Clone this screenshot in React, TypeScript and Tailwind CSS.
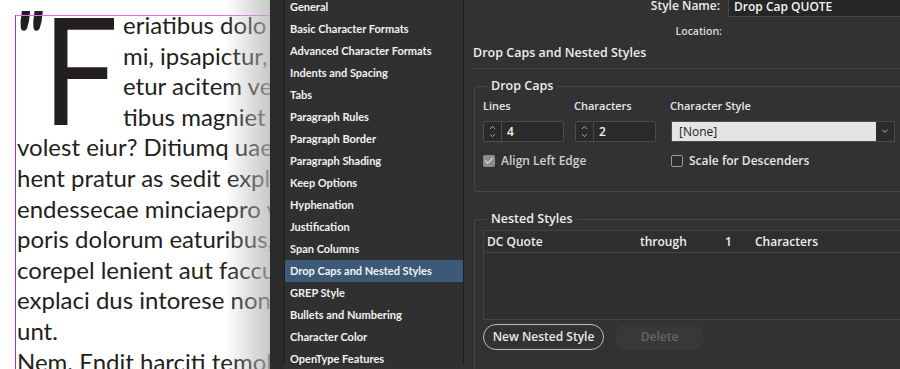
import { ChevronDown, ChevronUp, Check } from "lucide-react";

const items = [
  "General",
  "Basic Character Formats",
  "Advanced Character Formats",
  "Indents and Spacing",
  "Tabs",
  "Paragraph Rules",
  "Paragraph Border",
  "Paragraph Shading",
  "Keep Options",
  "Hyphenation",
  "Justification",
  "Span Columns",
  "Drop Caps and Nested Styles",
  "GREP Style",
  "Bullets and Numbering",
  "Character Color",
  "OpenType Features",
];

const capLines = ["eriatibus dolo", "mi, ipsapictur,", "etur acitem ve", "tibus magniet"];
const bodyLines = [
  "volest eiur? Ditiumq uae",
  "hent pratur as sedit expl",
  "endessecae minciaepro v",
  "poris dolorum eaturibus,",
  "corepel lenient aut faccu",
  "explaci dus intorese non",
  "unt.",
  "Nem. Endit harciti temol",
];

function Spinner({ value, width }: { value: string; width: string }) {
  return (
    <div className={`flex h-[21px] ${width} border border-[#4b4b4b] rounded-[2px] bg-[#2a2a2a]`}>
      <div className="w-[18px] flex flex-col items-center justify-center border-r border-[#4b4b4b] text-[#cfcfcf]">
        <ChevronUp size={9} strokeWidth={2} className="-mb-[1px]" />
        <ChevronDown size={9} strokeWidth={2} />
      </div>
      <div className="flex-1 pl-[5px] text-[12px] leading-[19px] font-semibold text-[#f2f2f2]">{value}</div>
    </div>
  );
}

export default function App() {
  return (
    <div className="w-[900px] h-[369px] overflow-hidden flex bg-white">
      {/* document page */}
      <div className="relative w-[270px] shrink-0 h-full bg-white overflow-hidden" style={{ fontFamily: "Lato, 'Open Sans', sans-serif" }}>
        <div className="pt-[10px] pl-[17px] text-[24px] leading-[30.6px] text-[#231f20] whitespace-nowrap">
          <div className="flex">
            <div className="w-[106px] h-[122px] flex shrink-0">
              <span className="w-[39px] text-[72px] leading-[60px] font-black italic -mt-[4px] -ml-[2px]">"</span>
              <span className="inline-block h-[110px] text-[150px] leading-[110px] mt-[2px] scale-x-90 origin-left">F</span>
            </div>
            <div>
              {capLines.map((l) => (
                <div key={l}>{l}</div>
              ))}
            </div>
          </div>
          {bodyLines.map((l) => (
            <div key={l}>{l}</div>
          ))}
        </div>
        {/* guides and shadow overlay */}
        <div className="absolute left-[15px] right-0 top-[15px] h-px bg-[#e36af2]" />
        <div className="absolute left-[15px] top-[15px] bottom-0 w-px bg-[#8a3be8]" />
        <div className="absolute right-0 top-0 bottom-0 w-[45px] bg-gradient-to-r from-transparent to-[#b5b5b5]/75" />
      </div>

      {/* dialog */}
      <div className="flex-1 h-full flex bg-[#323232] text-[#e6e6e6]" style={{ fontFamily: "'Open Sans', Lato, sans-serif" }}>
        <div className="w-[14px] shrink-0 bg-[#2a2a2a]" />
        <div className="w-[180px] shrink-0 h-full border-l border-r border-[#1f1f1f] bg-[#303030] -mt-[4px]" style={{ fontFamily: "Lato, 'Open Sans', sans-serif" }}>
          {items.map((it) => (
            <div
              key={it}
              className={`h-[22px] pl-[5px] text-[11px] font-bold leading-[22px] text-[#f2f2f2] whitespace-nowrap ${
                it === "Drop Caps and Nested Styles" ? "bg-[#3c5a77]" : ""
              }`}
            >
              {it}
            </div>
          ))}
        </div>

        <div className="flex-1 pl-[9px] text-[11px] font-semibold overflow-hidden">
          <div className="flex items-center h-[20px] -mt-[4px]">
            <div className="w-[247px] text-right text-[12px] text-[#ededed]">Style Name:</div>
            <div className="ml-[8px] flex-1 h-[21px] -mr-[4px] bg-[#262626] border border-[#474747] pl-[5px] text-[12px] leading-[19px] text-[#f4f4f4]">
              Drop Cap QUOTE
            </div>
          </div>
          <div className="flex h-[22px] items-center mt-[5px]">
            <div className="w-[249px] text-right text-[10.5px] text-[#dcdcdc]">Location:</div>
          </div>
          <div className="mt-[1px] text-[12.5px] leading-[18px] text-[#ededed]">Drop Caps and Nested Styles</div>
          <div className="mt-[6px] h-px bg-[#454545] -mr-[2px]" />

          <fieldset className="mt-[9px] ml-[1px] -mr-[4px] h-[114px] border border-[#484848] rounded-[3px] px-[8px] pt-0">
            <legend className="ml-[4px] px-[4px] text-[12.5px] leading-[16px] text-[#ededed]">Drop Caps</legend>
            <div className="flex mt-[4px] text-[11px] text-[#e6e6e6]">
              <div className="w-[91px]">Lines</div>
              <div className="w-[96px]">Characters</div>
              <div>Character Style</div>
            </div>
            <div className="flex mt-[6px] items-center">
              <Spinner value="4" width="w-[81px]" />
              <div className="w-[11px]" />
              <Spinner value="2" width="w-[81px]" />
              <div className="w-[15px]" />
              <div className="flex flex-1 h-[21px] border border-[#4b4b4b]">
                <div className="flex-1 bg-[#e4e4e4] pl-[7px] text-[12px] leading-[19px] font-normal text-[#1e1e1e]">[None]</div>
                <div className="w-[18px] flex items-center justify-center bg-[#2b2b2b] text-[#bdbdbd]">
                  <ChevronDown size={10} strokeWidth={2} />
                </div>
              </div>
            </div>
            <div className="flex mt-[10px] items-center text-[12px] text-[#e6e6e6]">
              <div className="w-[188px] flex items-center">
                <div className="w-[12px] h-[12px] rounded-[2px] bg-[#8c8c8c] flex items-center justify-center text-[#d8d8d8]">
                  <Check size={10} strokeWidth={3} />
                </div>
                <span className="ml-[6px] text-[#cfcfcf]">Align Left Edge</span>
              </div>
              <div className="flex items-center">
                <div className="w-[12px] h-[12px] rounded-[2px] border border-[#9a9a9a] bg-[#2c2c2c]" />
                <span className="ml-[6px]">Scale for Descenders</span>
              </div>
            </div>
          </fieldset>

          <fieldset className="mt-[19px] ml-[1px] -mr-[4px] h-[160px] border border-[#484848] rounded-[3px] px-[8px] pt-0">
            <legend className="ml-[4px] px-[4px] text-[12.5px] leading-[16px] text-[#ededed]">Nested Styles</legend>
            <div className="h-[90px] border border-[#444] bg-[#2f2f2f] -mr-[8px] mt-[3px]">
              <div className="flex h-[22px] items-center border-b border-[#444] text-[12px] text-[#eeeeee]">
                <div className="w-[156px] pl-[3px]">DC Quote</div>
                <div className="w-[85px]">through</div>
                <div className="w-[30px]">1</div>
                <div>Characters</div>
              </div>
            </div>
            <div className="flex mt-[4px] gap-[11px]">
              <div className="h-[26px] w-[121px] rounded-full border border-[#bdbdbd] flex items-center justify-center text-[12px] text-[#e8e8e8]">
                New Nested Style
              </div>
              <div className="h-[26px] w-[89px] rounded-full bg-[#383838] flex items-center justify-center text-[12px] text-[#666]">
                Delete
              </div>
            </div>
          </fieldset>
        </div>
      </div>
    </div>
  );
}
